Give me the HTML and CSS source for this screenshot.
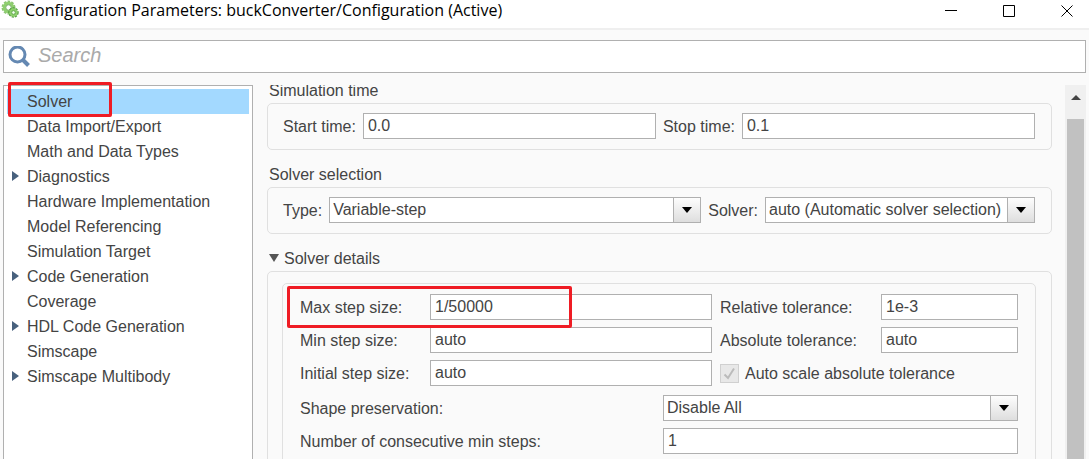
FILE: index.html
```html
<!DOCTYPE html>
<html lang="en">

<head>
    <meta charset="UTF-8">
    <meta name="viewport" content="width=device-width, initial-scale=1.0">
    <title>Configuration Parameters</title>
    <link rel="stylesheet" href="styles.css">
</head>

<body>
    <header class="titlebar">
        <svg class="app-icon" viewBox="0 0 20 20" aria-hidden="true">
            <circle cx="8.5" cy="7.5" r="6" fill="none" stroke="#8cc474" stroke-width="2" stroke-dasharray="2.6 1.2" />
            <circle cx="8.5" cy="7.5" r="4.3" fill="#fff" stroke="#8fcf6f" stroke-width="3" />
            <circle cx="8.5" cy="7.5" r="2.7" fill="#fff" stroke="#5d9c4c" stroke-width=".8" />
            <circle cx="13.5" cy="12.5" r="4.4" fill="none" stroke="#4e9a3c" stroke-width="1.6" stroke-dasharray="2.2 1" />
            <circle cx="13.5" cy="12.5" r="3" fill="#fff" stroke="#8ed06c" stroke-width="2.4" />
            <circle cx="13.5" cy="12.5" r="1.8" fill="#f4fff0" stroke="#4e9a3c" stroke-width=".8" />
        </svg>
        <h1>Configuration Parameters: buckConverter/Configuration (Active)</h1>
        <div class="window-buttons">
            <button type="button" aria-label="Minimize"><svg viewBox="0 0 12 12"><path d="M0 5.5H12" /></svg></button>
            <button type="button" aria-label="Maximize"><svg viewBox="0 0 12 12"><path d="M.5 .5H11.5V11.5H.5Z" /></svg></button>
            <button type="button" aria-label="Close"><svg viewBox="0 0 12 12"><path d="M.5 .5L11.5 11.5M11.5 .5L.5 11.5" /></svg></button>
        </div>
    </header>

    <div class="search">
        <svg class="search-icon" viewBox="0 0 22 22" aria-hidden="true">
            <circle cx="9.5" cy="8.5" r="7.5" />
            <path d="M14.5 13.5L20.5 19.5" />
        </svg>
        <input type="text" placeholder="Search" aria-label="Search">
    </div>

    <main class="content">
        <!-- Category tree -->
        <nav class="tree" aria-label="Categories">
            <ul>
                <li class="selected"><a href="#">Solver</a><span class="highlight highlight-solver"></span></li>
                <li><a href="#">Data Import/Export</a></li>
                <li><a href="#">Math and Data Types</a></li>
                <li class="parent"><a href="#">Diagnostics</a></li>
                <li><a href="#">Hardware Implementation</a></li>
                <li><a href="#">Model Referencing</a></li>
                <li><a href="#">Simulation Target</a></li>
                <li class="parent"><a href="#">Code Generation</a></li>
                <li><a href="#">Coverage</a></li>
                <li class="parent"><a href="#">HDL Code Generation</a></li>
                <li><a href="#">Simscape</a></li>
                <li class="parent"><a href="#">Simscape Multibody</a></li>
            </ul>
        </nav>

        <!-- Solver pane -->
        <form class="pane">
            <h2>Simulation time</h2>
            <div class="group line">
                <label for="start-time">Start time:</label>
                <input class="field" type="text" id="start-time" value="0.0">
                <label for="stop-time">Stop time:</label>
                <input class="field" type="text" id="stop-time" value="0.1">
            </div>

            <h2>Solver selection</h2>
            <div class="group line">
                <label for="type">Type:</label>
                <div class="select">
                    <select class="field" id="type">
                        <option>Variable-step</option>
                    </select>
                </div>
                <label for="solver">Solver:</label>
                <div class="select select-solver">
                    <select class="field" id="solver">
                        <option>auto (Automatic solver selection)</option>
                    </select>
                </div>
            </div>

            <h2 class="open">Solver details</h2>
            <div class="group outer">
                <div class="group details">
                    <span class="highlight highlight-step"></span>
                    <div class="steps">
                        <label for="max-step">Max step size:</label>
                        <input class="field" type="text" id="max-step" value="1/50000">
                        <label class="second" for="rel-tol">Relative tolerance:</label>
                        <input class="field" type="text" id="rel-tol" value="1e-3">

                        <label for="min-step">Min step size:</label>
                        <input class="field" type="text" id="min-step" value="auto">
                        <label class="second" for="abs-tol">Absolute tolerance:</label>
                        <input class="field" type="text" id="abs-tol" value="auto">

                        <label for="init-step">Initial step size:</label>
                        <input class="field" type="text" id="init-step" value="auto">
                        <div class="check">
                            <span class="check-box">
                                <input type="checkbox" id="auto-scale" checked disabled>
                                <svg viewBox="0 0 19 19" aria-hidden="true"><path d="M4.5 10.5L8 14L14 4.5" /></svg>
                            </span>
                            <label for="auto-scale">Auto scale absolute tolerance</label>
                        </div>
                    </div>
                    <div class="options">
                        <label for="shape">Shape preservation:</label>
                        <div class="select">
                            <select class="field" id="shape">
                                <option>Disable All</option>
                            </select>
                        </div>
                        <label for="min-steps">Number of consecutive min steps:</label>
                        <input class="field" type="text" id="min-steps" value="1">
                    </div>
                </div>
            </div>
        </form>

        <div class="scrollbar">
            <button type="button" aria-label="Scroll up"></button>
            <div class="thumb"></div>
        </div>
    </main>
</body>

</html>
```
FILE: styles.css
```css
* {
    margin: 0;
    padding: 0;
    box-sizing: border-box;
}

body {
    display: flex;
    flex-direction: column;
    height: 100vh;
    overflow: hidden;
    background: #fafafa;
    color: #444;
    font: 16px/18px "Liberation Sans", Arial, sans-serif;
}

input,
select,
button {
    font: inherit;
    color: inherit;
}

/* Title bar */
.titlebar {
    display: flex;
    align-items: flex-start;
    height: 30px;
    flex: none;
    background: #fff;
    border-bottom: 2px solid #efefef;
}

.app-icon {
    width: 20px;
    height: 20px;
}

.titlebar h1 {
    flex: 1;
    padding-left: 5px;
    font: 16px/20px "Open Sans", sans-serif;
    color: #000;
}

.window-buttons {
    display: flex;
}

.window-buttons button {
    width: 58px;
    height: 18px;
    padding: 3px 0 0 30px;
    border: none;
    background: none;
}

.window-buttons svg {
    display: block;
    width: 12px;
    height: 12px;
    fill: none;
    stroke: #000;
}

/* Search */
.search {
    display: flex;
    align-items: center;
    flex: none;
    height: 33px;
    margin: 10px 3px 12px;
    padding-left: 4px;
    background: #fff;
    border: 1px solid #b0b0b0;
}

.search-icon {
    width: 22px;
    height: 22px;
    fill: none;
    stroke: #6488b2;
    stroke-width: 3;
}

.search-icon path {
    stroke-width: 4;
}

.search input {
    flex: 1;
    padding: 0 8px 2px;
    border: none;
    outline: none;
    background: none;
    font-size: 20px;
    font-style: italic;
}

.search input::placeholder {
    color: #aaa;
}

.content {
    display: flex;
    flex: 1;
    min-height: 0;
    padding: 0 3px;
}

/* Tree */
.tree {
    flex: none;
    width: 250px;
    padding: 3px;
    background: #fff;
    border: 1px solid #b0b0b0;
    border-bottom: none;
}

.tree ul {
    list-style: none;
}

.tree li {
    position: relative;
    padding-left: 20px;
    line-height: 25px;
}

.tree a {
    color: inherit;
    text-decoration: none;
}

.tree .selected {
    background: #a3d9ff;
}

.tree .parent::before {
    content: "";
    position: absolute;
    left: 5px;
    top: 7px;
    border: 5px solid transparent;
    border-left: 7px solid #48617d;
    border-right: none;
}

/* Pane */
.pane {
    flex: 1;
    min-width: 0;
    overflow: hidden;
    padding: 0 13px 0 14px;
}

.pane h2 {
    margin: 15px 0 2px;
    padding-left: 2px;
    font-size: 16px;
    font-weight: normal;
    line-height: 20px;
}

.pane h2:first-child {
    margin-top: -4px;
}

.pane h2.open::before {
    content: "";
    display: inline-block;
    margin-right: 5px;
    vertical-align: 2px;
    border: 5px solid transparent;
    border-top: 8px solid #555;
    border-bottom: none;
}

.pane label {
    padding-top: 2px;
}

.group {
    border: 1px solid #e0e0e0;
    border-radius: 5px;
}

.line {
    display: flex;
    align-items: center;
    gap: 7px;
    padding: 9px 16px 10px 15px;
}

.outer {
    padding: 11px 15px 11px 14px;
}

.details {
    position: relative;
    padding: 10px 17px;
}

.field {
    display: block;
    width: 100%;
    min-width: 0;
    height: 26px;
    padding: 0 4px;
    background: #fff;
    border: 1px solid #b0b0b0;
    border-radius: 0;
    outline: none;
    appearance: none;
}

.line .field {
    flex: 1;
}

.select {
    position: relative;
    flex: 1;
}

.select-solver {
    flex: none;
    width: 270px;
}

.select .field {
    padding-left: 3px;
}

/* Drop-down button */
.select::before {
    content: "";
    position: absolute;
    top: 1px;
    right: 1px;
    bottom: 1px;
    width: 26px;
    border-left: 1px solid #b0b0b0;
    background: linear-gradient(#fdfdfd, #dedede);
    pointer-events: none;
}

.select::after {
    content: "";
    position: absolute;
    top: 10px;
    right: 9px;
    border: 5px solid transparent;
    border-top: 6px solid #000;
    border-bottom: none;
    pointer-events: none;
}

.steps,
.options {
    display: grid;
    align-items: center;
    row-gap: 7px;
}

.steps {
    grid-template-columns: 130px 1fr 169px 137px;
}

.pane .second {
    padding-left: 8px;
}

.options {
    grid-template-columns: 363px 1fr;
    margin-top: 9px;
}

.check {
    grid-column: span 2;
    display: flex;
    align-items: center;
    gap: 6px;
    padding-left: 8px;
}

.check-box {
    position: relative;
    width: 19px;
    height: 19px;
}

.check-box input {
    display: block;
    width: 19px;
    height: 19px;
    background: #e8e8e8;
    border: 1px solid #d0d0d0;
    appearance: none;
}

.check-box svg {
    position: absolute;
    inset: 0;
    fill: none;
    stroke: #bbb;
    stroke-width: 2;
}

/* Scrollbar */
.scrollbar {
    display: flex;
    flex-direction: column;
    width: 21px;
    padding: 0 2px;
    background: #f0f0f0;
}

.scrollbar button {
    height: 34px;
    padding-bottom: 10px;
    border: none;
    background: none;
}

.scrollbar button::before {
    content: "";
    display: block;
    width: 0;
    margin: 0 auto;
    border: 5px solid transparent;
    border-bottom-color: #444;
    border-top: none;
}

.thumb {
    flex: 1;
    background: #c1c1c1;
}

/* Red frames */
.highlight {
    position: absolute;
    border: 3px solid #ef1c24;
    border-radius: 2px;
    pointer-events: none;
}

.highlight-solver {
    left: 1px;
    top: -7px;
    width: 104px;
    height: 35px;
}

.highlight-step {
    left: 4px;
    top: 2px;
    width: 285px;
    height: 42px;
}
```
